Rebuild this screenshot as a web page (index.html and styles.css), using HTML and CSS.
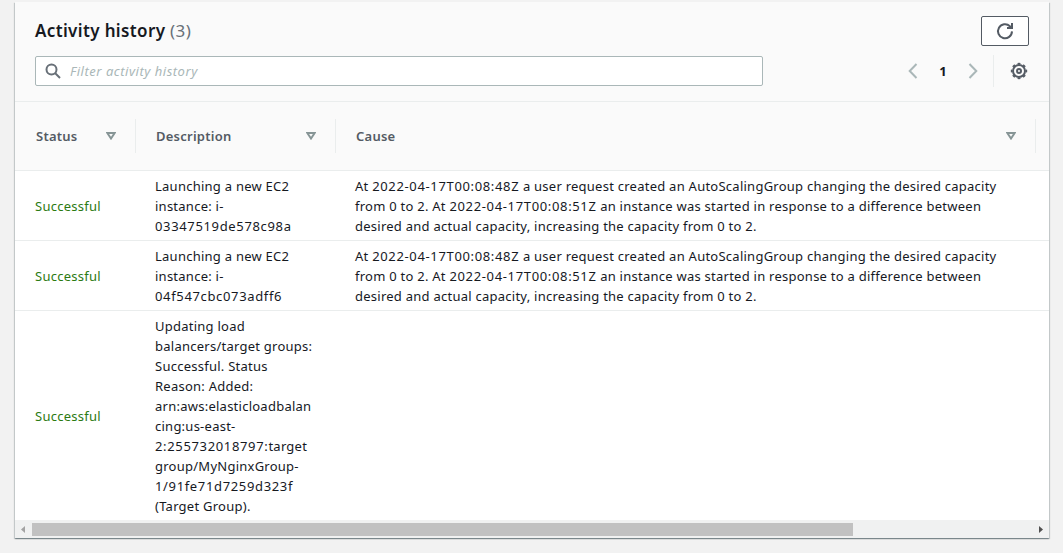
FILE: index.html
```html
<!DOCTYPE html>
<html lang="en">
<head>
<meta charset="utf-8">
<title>Activity history</title>
<link rel="stylesheet" href="styles.css">
</head>
<body>
<main class="panel">
  <header class="header">
    <div class="title-row">
      <h2 class="title"><span class="title-name">Activity history</span> <span class="count">(3)</span></h2>
      <button class="refresh" aria-label="Refresh">
        <svg width="20" height="20" viewBox="0 0 20 20" fill="none" stroke="#545b64" stroke-width="2"><path d="M17 10.4A7 7 0 1 1 14.9 5.2L16.2 6.4"/><path d="M17 2V7H12"/></svg>
      </button>
    </div>
    <div class="tools">
      <label class="filter">
        <svg width="16" height="16" viewBox="0 0 16 16" fill="none" stroke="#687078" stroke-width="2"><circle cx="6.500" cy="6.500" r="5"/><path d="M10 10l5 5"/></svg>
        <input class="filter-input" type="text" placeholder="Filter activity history">
      </label>
      <nav class="pages">
        <svg width="10" height="16" viewBox="0 0 10 16" fill="none" stroke="#aab7b8" stroke-width="2"><path d="M8.500 1L1.700 8l6.800 7"/></svg>
        <span class="page">1</span>
        <svg width="10" height="16" viewBox="0 0 10 16" fill="none" stroke="#aab7b8" stroke-width="2"><path d="M1.500 1l6.800 7-6.800 7"/></svg>
      </nav>
      <div class="settings">
        <svg width="18" height="18" viewBox="0 0 18 18" fill="none" stroke="#545b64"><circle cx="9" cy="9" r="6" stroke-width="2"/><circle cx="9" cy="9" r="7.400" stroke-width="1.600" pathLength="80" stroke-dasharray="5 5" stroke-dashoffset="2.500"/><circle cx="9" cy="9" r="2" stroke-width="2"/></svg>
      </div>
    </div>
  </header>
  <div class="grid head">
    <div class="th">Status<svg class="sort" width="10" height="8" viewBox="0 0 10 8"><path d="M1.300 1h7.400L5 6.500z"/></svg></div>
    <div class="th">Description<svg class="sort" width="10" height="8" viewBox="0 0 10 8"><path d="M1.300 1h7.400L5 6.500z"/></svg></div>
    <div class="th">Cause<svg class="sort" width="10" height="8" viewBox="0 0 10 8"><path d="M1.300 1h7.400L5 6.500z"/></svg></div>
  </div>
  <div class="grid row">
    <div class="td ok">Successful</div>
    <div class="td desc">Launching a new EC2<br>instance: i-<br><span class="num">03347519de578c98a</span></div>
    <div class="td cause">At <span class="num">2022-04-17T00:08:48Z</span> a user request created an AutoScalingGroup changing the desired capacity<br>from 0 to 2. At <span class="num">2022-04-17T00:08:51Z</span> an instance was started in response to a difference between<br>desired and actual capacity, increasing the capacity from 0 to 2.</div>
  </div>
  <div class="grid row">
    <div class="td ok">Successful</div>
    <div class="td desc">Launching a new EC2<br>instance: i-<br><span class="num">04f547cbc073adff6</span></div>
    <div class="td cause">At <span class="num">2022-04-17T00:08:48Z</span> a user request created an AutoScalingGroup changing the desired capacity<br>from 0 to 2. At <span class="num">2022-04-17T00:08:51Z</span> an instance was started in response to a difference between<br>desired and actual capacity, increasing the capacity from 0 to 2.</div>
  </div>
  <div class="grid row last">
    <div class="td ok">Successful</div>
    <div class="td desc">Updating load<br>balancers/target groups:<br>Successful. Status<br>Reason: Added:<br>arn:aws:elasticloadbalan<br>cing:us-east-<br><span class="num">2:255732018797:</span>target<br>group/MyNginxGroup-<br><span class="num">1/91fe71d7259d323f</span><br>(Target Group).</div>
    <div class="td cause"></div>
  </div>
  <div class="scrollbar">
    <svg width="17" height="17" viewBox="0 0 17 17"><path d="M10 5v7L6 8.500z" fill="#a3a3a3"/></svg>
    <div class="track"><div class="thumb"></div></div>
    <svg width="17" height="17" viewBox="0 0 17 17"><path d="M7 5v7l4-3.500z" fill="#505050"/></svg>
  </div>
</main>
</body>
</html>
```
FILE: styles.css
```css
* { box-sizing: border-box; }
body {
  margin: 0;
  height: 553px;
  padding: 2px 14px 0 15px;
  overflow: hidden;
  background: #f2f2f2;
  color: #16191f;
  font: 13px/20px "Noto Sans", "Open Sans", sans-serif;
}
svg { display: block; flex: none; }
.panel {
  height: 536px;
  background: #fff;
  box-shadow: 0 1px 1px 0 rgba(0, 28, 36, .3), 1px 1px 1px 0 rgba(0, 28, 36, .15), -1px 1px 1px 0 rgba(0, 28, 36, .15);
}
.header {
  height: 100px;
  padding: 14px 20px 0;
  background: #fafafa;
  border-bottom: 1px solid #eaeded;
}
.title-row { display: flex; justify-content: space-between; height: 40px; }
.title { margin: 0; font-size: 17px; line-height: 30px; font-weight: 400; letter-spacing: .36px; white-space: nowrap; }
.title-name { font-weight: 600; }
.count { color: #687078; }
.refresh {
  display: flex;
  align-items: center;
  justify-content: center;
  width: 48px;
  height: 30px;
  padding: 0;
  background: #fff;
  border: 1px solid #545b64;
  border-radius: 2px;
}
.tools { display: flex; align-items: center; height: 30px; }
.filter {
  display: flex;
  align-items: center;
  gap: 9px;
  width: 728px;
  height: 30px;
  padding-left: 9px;
  background: #fff;
  border: 1px solid #aab7b8;
  border-radius: 2px;
}
.filter-input {
  flex: 1;
  padding: 0;
  border: 0;
  outline: 0;
  background: none;
  font: italic 13px/20px "Noto Sans", "Open Sans", sans-serif;
  letter-spacing: .52px;
}
.filter-input::placeholder { color: #aab7b8; opacity: 1; }
.pages { display: flex; align-items: center; justify-content: space-between; width: 70px; margin-left: 145px; }
.page { font-weight: 700; }
.settings { display: flex; align-items: center; height: 32px; margin-left: 15px; padding-left: 16px; border-left: 1px solid #eaeded; }
.grid { display: grid; grid-template-columns: 120px 200px 1fr; border-bottom: 1px solid #eaeded; }
.head { height: 69px; padding: 17px 13px 0 1px; background: #fafafa; color: #545b64; font-weight: 600; letter-spacing: .24px; }
.th {
  display: flex;
  align-items: center;
  justify-content: space-between;
  height: 34px;
  padding: 0 19px 0 20px;
  border-right: 1px solid #eaeded;
}
.sort { fill: none; stroke: #879596; stroke-width: 2; }
.row { height: 70px; align-items: center; letter-spacing: .25px; }
.num { letter-spacing: .65px; }
.last { height: 209px; border-bottom: 0; }
.td { padding-left: 20px; white-space: nowrap; }
.ok { color: #2c7a12; }
.scrollbar { display: flex; height: 18px; padding-top: 1px; background: #f0f1f1; }
.track { flex: 1; padding: 2px 0; }
.thumb { width: 821px; height: 13px; background: #c1c1c1; }
```
